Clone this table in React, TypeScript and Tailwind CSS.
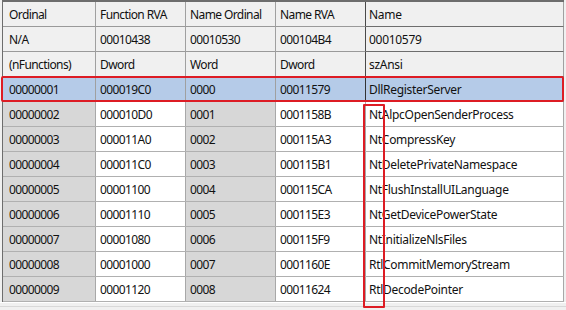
import React from "react";

type Row = [string, string, string, string, string];

const headerRows: Row[] = [
  ["Ordinal", "Function RVA", "Name Ordinal", "Name RVA", "Name"],
  ["N/A", "00010438", "00010530", "000104B4", "00010579"],
  ["(nFunctions)", "Dword", "Word", "Dword", "szAnsi"],
];

const selected: Row = ["00000001", "000019C0", "0000", "00011579", "DllRegisterServer"];

const dataRows: Row[] = [
  ["00000002", "000010D0", "0001", "0001158B", "NtAlpcOpenSenderProcess"],
  ["00000003", "000011A0", "0002", "000115A3", "NtCompressKey"],
  ["00000004", "000011C0", "0003", "000115B1", "NtDeletePrivateNamespace"],
  ["00000005", "00001100", "0004", "000115CA", "NtFlushInstallUILanguage"],
  ["00000006", "00001110", "0005", "000115E3", "NtGetDevicePowerState"],
  ["00000007", "00001080", "0006", "000115F9", "NtInitializeNlsFiles"],
  ["00000008", "00001000", "0007", "0001160E", "RtlCommitMemoryStream"],
  ["00000009", "00001120", "0008", "00011624", "RtlDecodePointer"],
];

const widths = ["w-[93px] pl-[6px]", "w-[90px] pl-[4px]", "w-[90px] pl-[4px]", "w-[90px] pl-[4px]", "w-[198px] pl-[3px]"];

const HeaderRow = ({ row }: { row: Row }) => (
  <div className="flex h-[25px] bg-[#f0f0f0]">
    {row.map((c, i) => (
      <div
        key={i}
        className={`${widths[i]} flex items-center pt-[1px] border-r border-b ${
          i === 3
            ? "border-r-[#4a4a4a] border-b-[#9a9a9a]"
            : i === 4
            ? "border-r-[#a0a0a0] border-b-[#6d6d6d]"
            : "border-r-[#a0a0a0] border-b-[#9a9a9a]"
        } ${i < 4 ? "tracking-[-0.6px]" : "tracking-[-0.3px]"}`}
      >
        {c}
      </div>
    ))}
  </div>
);

const SelectedRow = ({ row }: { row: Row }) => (
  <div className="flex h-[25px] bg-[#b5cbe8] border-b border-[#8a8a8a]">
    {row.map((c, i) => (
      <div
        key={i}
        className={`${widths[i]} flex items-center pt-[1px] border-r ${
          i === 3 ? "border-[#333]" : "border-[#a0a0a0]"
        } ${i === 4 ? "tracking-[-0.3px]" : "tracking-[-0.6px]"}`}
      >
        {c}
      </div>
    ))}
  </div>
);

const DataRow = ({ row }: { row: Row }) => (
  <div className="flex h-[25px] border-b border-[#b0b0b0]">
    {row.map((c, i) => (
      <div
        key={i}
        className={`${widths[i]} flex items-center pt-[1px] border-r border-[#a8a8a8] ${
          i === 0 || i === 2 ? "bg-[#d7d7d7]" : "bg-white"
        } ${i === 4 ? "tracking-[-0.3px]" : "tracking-[-0.6px]"}`}
      >
        {c}
      </div>
    ))}
  </div>
);

export default function App() {
  return (
    <div
      className="relative w-[566px] h-[310px] bg-[#f0f0f0] overflow-hidden text-[12px] text-[#111]"
      style={{ fontFamily: '"Noto Sans", "Open Sans", sans-serif' }}
    >
      <div className="ml-[2px] w-[562px] border-l border-t-2 border-[#6d6d6d] bg-white">
        {headerRows.map((r, i) => (
          <HeaderRow key={i} row={r} />
        ))}
        <SelectedRow row={selected} />
        {dataRows.map((r, i) => (
          <DataRow key={i} row={r} />
        ))}
      </div>
      <div className="h-[1px] bg-white" />
      <div className="mt-[3px] h-[1px] bg-[#d8d8d8]" />

      {/* highlight boxes */}
      <div className="absolute left-[1px] top-[76px] w-[563px] h-[26px] border-2 border-[#dd1c24] rounded-[2px]" />
      <div className="absolute left-[363px] top-[104px] w-[22px] h-[204px] border-2 border-[#dd1c24] rounded-[1px]" />
    </div>
  );
}
